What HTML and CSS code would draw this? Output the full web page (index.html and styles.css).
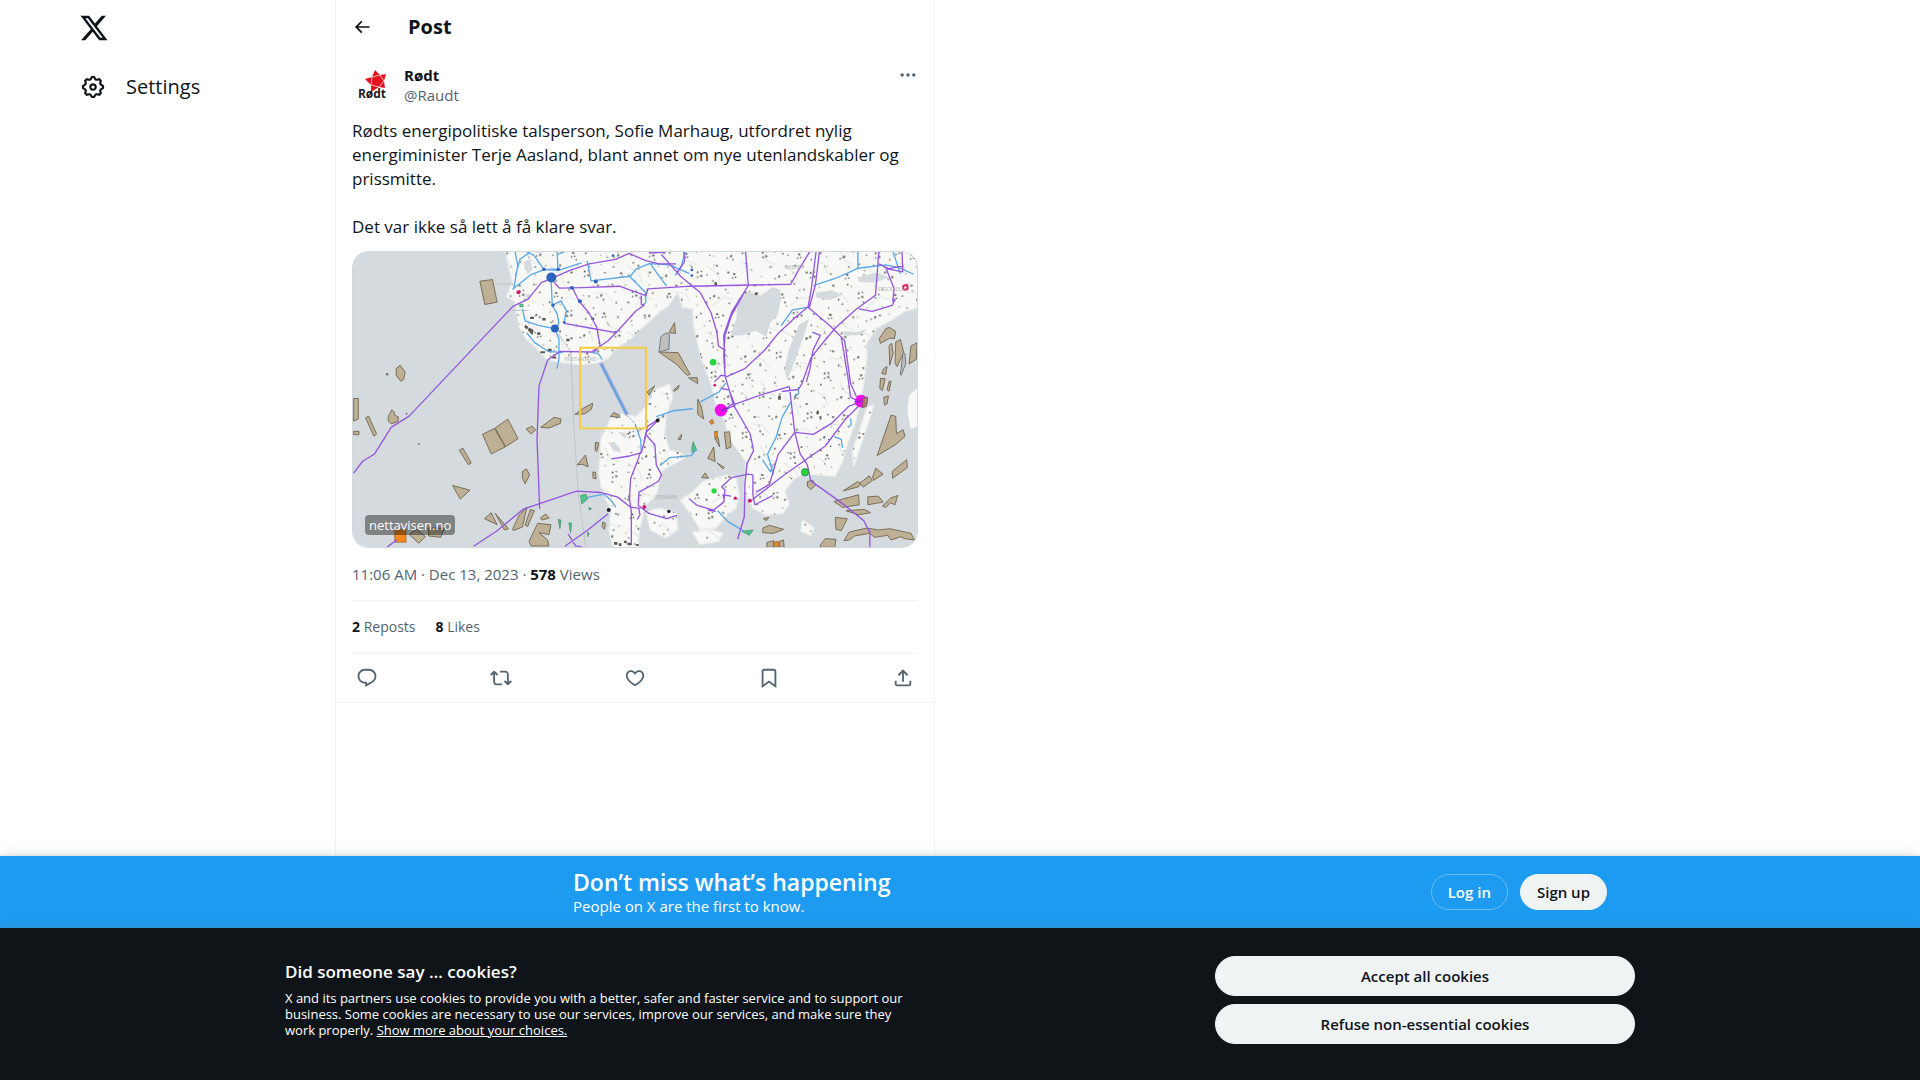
FILE: index.html
```
<!DOCTYPE html>
<html lang="en">
<head>
<meta charset="utf-8">
<meta name="viewport" content="width=device-width, initial-scale=1">
<title>Rødt on X</title>
<link rel="stylesheet" href="styles.css">
</head>
<body>
<div class="page">
  <header class="sidebar">
    <a class="logo" href="#" aria-label="X"><svg viewBox="0 0 24 24"><path d="M18.244 2.25h3.308l-7.227 8.26 8.502 11.24H16.17l-5.214-6.817L4.99 21.75H1.68l7.73-8.835L1.254 2.25H8.08l4.713 6.231zm-1.161 17.52h1.833L7.084 4.126H5.117z"/></svg></a>
    <nav>
      <a class="nav-link" href="#"><svg viewBox="0 0 24 24"><path d="M10.54 1.75h2.92l1.57 2.36c.11.17.32.25.53.21l2.53-.59 2.17 2.17-.58 2.54c-.05.2.04.41.21.53l2.36 1.57v2.92l-2.36 1.57c-.17.12-.26.33-.21.53l.58 2.54-2.17 2.17-2.53-.59c-.21-.04-.42.04-.53.21l-1.57 2.36h-2.92l-1.58-2.36c-.11-.17-.32-.25-.52-.21l-2.54.59-2.17-2.17.58-2.54c.05-.2-.03-.41-.21-.53l-2.35-1.57v-2.92L4.1 8.97c.18-.12.26-.33.21-.53L3.73 5.9 5.9 3.73l2.54.59c.2.04.41-.04.52-.21l1.58-2.36zm1.07 2l-.98 1.47C10.05 6.08 9 6.5 7.99 6.27l-1.46-.34-.6.6.33 1.46c.24 1.01-.18 2.07-1.05 2.64l-1.46.98v.78l1.46.98c.87.57 1.29 1.63 1.05 2.64l-.33 1.46.6.6 1.46-.34c1.01-.23 2.06.19 2.64 1.05l.98 1.47h.78l.97-1.47c.58-.86 1.63-1.28 2.65-1.05l1.45.34.61-.6-.34-1.46c-.23-1.01.18-2.07 1.05-2.64l1.47-.98v-.78l-1.47-.98c-.87-.57-1.28-1.63-1.05-2.64l.34-1.46-.61-.6-1.45.34c-1.02.23-2.07-.19-2.65-1.05l-.97-1.47h-.78zM12 10.5c-.83 0-1.5.67-1.5 1.5s.67 1.5 1.5 1.5c.82 0 1.5-.67 1.5-1.5s-.68-1.5-1.5-1.5zM8.5 12c0-1.93 1.56-3.5 3.5-3.5 1.93 0 3.5 1.57 3.5 3.5s-1.57 3.5-3.5 3.5c-1.94 0-3.5-1.57-3.5-3.5z"/></svg><span>Settings</span></a>
    </nav>
  </header>

  <main class="column">
    <div class="topbar">
      <button class="icon-button" type="button" aria-label="Back"><svg class="arrow" viewBox="0 0 24 24"><path d="M7.414 13l5.043 5.04-1.414 1.42L3.586 12l7.457-7.46 1.414 1.42L7.414 11H21v2H7.414z"/></svg></button>
      <h1>Post</h1>
    </div>

    <article class="post">
      <div class="author">
        <svg class="avatar" viewBox="0 0 40 40" role="img" aria-label="Rødt">
          <path fill="#e3101d" d="M23 5l5 5 6-1-2 7 1 7-6-1-8 5v-7l-6-6 7-2z"/>
          <path stroke="#fff" stroke-width=".7" fill="none" d="M20 12l8-2 4 6-5 6-8-2z"/>
          <text class="avatar-name" x="20" y="33" text-anchor="middle">Rødt</text>
        </svg>
        <div class="names">
          <a class="name" href="#">Rødt</a>
          <a class="handle" href="#">@Raudt</a>
        </div>
        <button class="icon-button more" type="button" aria-label="More"><svg viewBox="0 0 24 24"><path d="M3 12c0-1.1.9-2 2-2s2 .9 2 2-.9 2-2 2-2-.9-2-2zm9 2c1.1 0 2-.9 2-2s-.9-2-2-2-2 .9-2 2 .9 2 2 2zm7 0c1.1 0 2-.9 2-2s-.9-2-2-2-2 .9-2 2 .9 2 2 2z"/></svg></button>
      </div>

      <div class="text" lang="no">
        <p>Rødts energipolitiske talsperson, Sofie Marhaug, utfordret nylig energiminister Terje Aasland, blant annet om nye utenlandskabler og prissmitte.</p>
        <p>Det var ikke så lett å få klare svar.</p>
      </div>

      <a class="card" href="#">
        <svg class="map" viewBox="22 19 1698 888" preserveAspectRatio="xMidYMid slice" role="img" aria-label="Map of power cables between Norway, Denmark and Sweden">
          <defs>
            <pattern id="sites" width="236" height="198" patternUnits="userSpaceOnUse">
              <g fill="#555a4e">
                <path d="M12 20h5v5h-5zM42 8h4v4h-4zM78 33h6v4h-6zM110 14h4v6h-4zM150 27h4v4h-4zM190 10h5v5h-5zM220 40h4v4h-4zM25 60h4v5h-4zM96 62h5v4h-5zM142 86h4v4h-4zM171 58h5v5h-5zM205 78h6v5h-6zM48 118h7v4h-7zM93 115h4v5h-4zM160 104h4v5h-4zM198 130h4v4h-4zM22 150h5v4h-5zM66 160h4v6h-4zM140 168h5v5h-5zM176 155h5v4h-5zM36 186h4v4h-4z"/>
              </g>
              <path stroke="#dfe5e4" stroke-width="3" fill="none" d="M5 45l22 12 8 30M70 12l18 34 26 10M140 60l36 24 8 30M40 140l36 4 20 28M160 180l34-26 26 8"/>
            </pattern>
            <pattern id="clusters" width="157" height="131" patternUnits="userSpaceOnUse" patternTransform="rotate(23)">
              <path fill="#454a40" d="M8 12h6v5h-6zM17 20h4v4h-4zM9 25h4v4h-4zM62 50h5v5h-5zM72 44h4v4h-4zM76 56h6v5h-6zM68 64h4v4h-4zM120 30h4v4h-4zM136 96h5v7h-5zM128 108h4v4h-4zM30 100h4v4h-4z"/>
              <path fill="#a9a08a" d="M34 40h5v4h-5zM100 12h4v4h-4zM104 80h4v4h-4zM52 112h5v4h-5zM88 118h4v4h-4zM144 60h4v4h-4zM14 72h4v4h-4z"/>
            </pattern>
            <path id="land" d="M480 10L490 60 502 110 484 154 508 168 516 208 522 244 542 280 574 308 602 340 642 352 702 358 752 354 790 340 812 310 852 286 900 240 946 198 972 180 1000 140 1014 186 1045 190 1047 240 1059 290 1069 336 1089 386 1104 430 1114 480 1142 530 1154 580 1184 620 1204 650 1200 740 1225 790 1266 812 1316 806 1336 778 1322 740 1348 704 1378 688 1418 690 1474 694 1496 650 1510 598 1532 540 1548 480 1560 416 1570 328 1566 298 1598 248 1636 228 1680 200 1724 186V10zM765 640l4-60 28-60 34-12 44 6 32-34 20-44 48-20 10 40-20 54-5 60 15 45 40 10 5 15-65 35-10 35-10 40-30 30-20 70-5 60h-75l-12-50 4-70-25-45-10-60zM905 800l40-10 50 14 5 50-36 26-48-24zM1045 740l30-30 70-20 30 6 10 54-10 40-28 22-32 38-48 4-34-54-26-34zM1045 862l50-8 40 12-10 24-60 10zM1590 480l-15 50-30 90-15 45-5-45 20-60 25-75zM1375 825l35 25-10 22-30-12z"/>
          </defs>
          <path fill="#d4dadd" d="M0 0h1740v930H0z"/>
          <use href="#land" fill="#f8f9f7" stroke="#e9edec" stroke-width="4"/>
          <path fill="#f8f9f7" d="M1720 430l-24 20-5 50 10 52 22-8z"/>
          <use href="#land" fill="url(#sites)"/>
          <use href="#land" fill="url(#clusters)"/>

          <g fill="#d4dadd">
            <path d="M1180 160l34-20 36 10 34-26 24 8 2 34-10 44-22 22-12 42-32-18-38 14-38 2 18-52zM1395 220l-15 50-25 70-26 64-8-32 14-62 30-72zM1415 142l50-8 26 16-34 14-40-8zM1540 95l60-14 36 14-40 16-50-2zM1490 258l50 2 30-10-20 18-46 4z"/>
            <path d="M535 50l20-10 8 30-16 16zM540 150l16-6-4 22zM790 590l24 6 16 26-24-4zM820 560l30 6-10 14z"/>
          </g>
          <path stroke="#bfc5c8" stroke-width="3" fill="none" d="M640 265l38 55 8 210 15 225 22 150M450 115h50M500 195h50"/>

          <g fill="#beb095" stroke="#776d59" stroke-width="3">
            <path d="M404 107l38-5 14 68-37 7zM412 568l36-18 32 56-42 21zM450 549l38-27 31 59-38 24zM152 370l12-10 15 20-4 22-9 6-14-17zM24 460h14v62l-14 6zM60 518l9-5 24 54-8 7zM128 515l11-21 8 8v8l12 6-2 14-20 6-9-8zM24 559h16v10H24zM342 616l11-6 25 44-9 5zM322 722l52 14-29 27zM532 680l12-8 10 18-14 27-8-18zM543 552l18-9 11 12-14 12zM587 547l40-30 21 4-2 14-34 14zM690 508l24-18 30-16-4 18-20 14zM797 514l10-12 18 9-4 6zM697 660l25-30 8 36-18-8zM752 592l10 2-6 26-5-4z"/>
            <path d="M418 822l20-18 18 36zM450 806l40 46-12 4zM502 855l20-44 24-24-14 60-26 10zM540 842l16-48 12 4-20 47zM586 820l16-12 11 12-22 6zM552 890l26-54 40 4-6 30-30-6 26 22 4 18h-54zM192 870l20-18 28 24-20 20zM248 850h50l-12 28-36-4zM744 682h8l2 20-9-2zM774 832l8 4-3 18-7-8z"/>
            <path d="M990 232l3 32-20-2zM943 320l58 2 36 66-10 2-30-32zM1032 398l26-1 2 18zM908 440l22-18-16 28zM988 434l16-14-4 12-12 6zM1060 462l10 20 8 40-18-14zM1140 562l16-2 4 46-14 6zM1112 558l10 24 4 24-10-18zM1090 640l18-34 4 44zM1072 698l10-14 10 16zM1000 582l12-14-4 16zM1118 654l22 14-4 4zM1256 850l20-8 42 12-30 12-32-2zM1258 822l16-4-8 10z"/>
            <path d="M1606 280l20-30 10-4 20 12-4 22-14-2-6 4-22 12zM1636 300l8-6 4 30-10 36zM1656 290l14-8 10 40-20 42-6-10zM1702 302l18-10-2 50-22 14zM1620 370l10-6-4 24-12-4zM1610 400h14l-8 36-8-6zM1636 408h6l-6 30-6-4zM1620 456l14-4-4 24-8 4zM1600 632l42-122 14 4 2 52 20-12 6 20-30 26zM1645 680l44-36 2 24-44 32zM1498 738l44-28 8 6-6 10zM1548 715l28-22 10 14-28 20zM1586 696l10-26 22 18-28 18zM1470 770l74-20 2 30-50 8zM1506 798l56-4 18 10-36 6zM1572 756l32-2 14 18-46 8zM1616 784l24-24 22-8-8 28-14-6-14 14zM1474 818l36 4-18 36-16-4zM1500 888l16-26 54-12 34 6 34-4 64 14 10 20-30-4-10-6-30 10-10-14-40 6-14-12-46 8-16 12zM1430 900l14-18 32 2-4 24h-44zM1390 710l16-4 8 16-14 12-10-10z"/>
          </g>
          <path fill="#bdbfc1" stroke="#777" stroke-width="3" d="M943 320l6-46 16-12 10 6-2 44zM1670 388l8-66 6 4 2 30-14 34z"/>
          <path fill="#f5871f" stroke="#80683a" stroke-width="2" d="M147 857l34-4 1 40h-34zM1095 530l8-8 6 12-8 4zM1110 562l10-4-2 18-6 8zM1290 892l12-2 4 16h-16z"/>
          <path fill="#beb095" stroke="#776d59" stroke-width="3" d="M1268 894l20-6v20h-20zM1306 890l12-4 2 22h-14z"/>
          <path fill="#4fc38a" stroke="#3a8a63" stroke-width="2" d="M707 752l16-4 6 14-18 16zM732 788l8 4-6 4zM1042 610l4-20 11 26-14 6zM1193 860l34-4-12 16zM524 176h10v8h-10zM672 834l8 2-3 28zM640 824l8 2-3 26zM728 862l5 4-4 10z"/>
          <path fill="#5c5850" d="M808 892h10v8h-10zM822 896h8v8h-8zM838 888h8v7h-8zM850 894h12v8h-12zM874 898h8v6h-8zM540 238l10 6-4 8-8-6zM552 246l14 8-4 16-14-16zM555 215h12v6h-12zM592 218h10v7h-10zM576 262h10v6h-10zM608 310h12v8h-12zM586 318h14v6h-14zM622 334h12v6h-12zM664 280h10v8h-10zM740 216h8v8h-8zM1110 110h8v10h-8zM1234 140l8 2-4 8-8-4zM1420 495l6 6-4 8-6-4zM1426 512l8 4-6 10zM1302 452h8v12h-8z"/>

          <g fill="none" stroke="#5aa8e8" stroke-width="4" stroke-linejoin="round">
            <path d="M510 19l8 40-12 70M545 19l22 10 30 43 42-2-2-44 20-7M502 132l54-44 42-16 42 2 70-22M555 20l-30 20-14 50M618 96l4 84 14 24 6 30-12 16 12 30v62l-6 28M624 178l24-12 16 28-6 36M532 190l8 36 40 14 50 10M545 262l24 30 40 26 44 4M727 46l12 60 118-14 18-22 40-16 60 4 60 26M852 90l50 50 2 30-10 10M918 56l48 66M1022 19l-12 44-18 26M740 322l20 2 12 18M1408 120l68-22 66-30 84-10 40 8 44 20M1542 72V19M1648 19l22 66M1395 185l-50 8-34 48M1340 470l-26 46-18 60-26 52 18 60M1255 645l24 36 6-20M1068 470l56-30 20-26M935 515l50-18 60-6M946 662l30-24 64-6 16-20M1120 798l30 32 50 30M728 758l50-10 22 20 14 20M872 540l16 44 2 36M1470 575l22 8 4 26M1520 520l2 20-10 6M1362 425l2 20-14 10"/>
          </g>
          <g fill="none" stroke="#9457e0" stroke-width="4" stroke-linejoin="round">
            <path d="M24 685l27-36 36-22 50-80 54-34 312-330 46-22 40-50 30-12 54-24 60-20 80-14 40-18 50 22 42 10h50M618 100l26 28 70-2 110-4 50 18 30 10 6-20 130-8 300-6 22-40 46-76M682 126l20 40 30 36 24 44 10 56-20 20M658 234l90 16 66 12 60-66 24-16M814 262l-24 24-50 34-94-2-38 26-26 78-6 160 8 210M385 905l70-46 80-66 60-20 100-34 74 4 50 14 38 30 30 4M660 905l70-50 60-48M670 868l22 36 18 2M125 907l30-22M800 642l50-8 40-10 8-30 10-50 36-22"/>
            <path d="M888 620l-10 30-20 50-4 60 6 40v100M898 590l8-30 34-34M905 570l26 30 4 60 16 30-10 20-58 32-2 40 32 24 54 16 30-10M882 790l4 20-8 14"/>
            <path d="M890 150v26l10 4M914 22l50-3M950 26l58 66 60 50 32 60 18 60 4 40 22 14M1018 19l2 30-24 34M1204 19l8 100-50 90-20 60-4 60 4 62 26 90 50 86 10 50-20 40-6 60-2 100-20 66M1206 130l-44 70-24 70 4 100M1152 392l50-22 60-56 40-50 50-46 40-34M1416 19l-14 110-10 56 70 60 40 40 18 130 18 40M1426 19l-12 100-18 66M1492 276l20 120 8 60 30 16M1605 19l-10 130-60 44-60 54-34 40-40 50-28 80-10 16-50 6M1545 190l40 8 60-18 10-20M1170 478l90-32 70-20h6l16 136 16 64 22 34 10 48 90 64 70 56 18 36v44M1352 562l56 6 56-34 50-50 40-16M1224 765l90-70 70-50 60-42 60-80 50-50M1352 562l-50 66-26 90-40 24M1110 410l20-20 22 4M1130 430l24 4 18 46-30 14M1145 490l24-18M1405 260l24 10-22 44-10 60-10 36M1675 19l2 60-50-10 24 60-4 40M1605 55l30 14 44-8"/>
            <path d="M1034 762l24 20 50 14 30-24 4-36-10-10 30-28 50-10 14 2v60l6 30 54-28M1140 768l-4-18 24 4M1090 796l24 4"/>
          </g>
          <path stroke="#c3b5d9" stroke-width="12" d="M768 352l80 158"/>
          <path stroke="#6ba5df" stroke-width="8" d="M769 356l77 152"/>
          <path stroke="#74889c" stroke-width="3" stroke-dasharray="6 5" fill="none" d="M848 512l22 22 14 28"/>
          <path fill="none" stroke="#f4cc3e" stroke-width="6" d="M706 307h198v243H706z"/>

          <g fill="#2a64bd"><circle cx="619" cy="96" r="15"/><circle cx="630" cy="249" r="12"/><circle cx="681" cy="127" r="6"/><circle cx="705" cy="167" r="6"/><circle cx="753" cy="108" r="6"/><circle cx="597" cy="71" r="5"/><circle cx="640" cy="71" r="5"/><circle cx="624" cy="179" r="5"/><circle cx="658" cy="231" r="4"/><circle cx="805" cy="30" r="4"/><circle cx="1042" cy="73" r="4"/><circle cx="1042" cy="90" r="4"/></g>
          <g fill="#ef0ee7"><circle cx="1130" cy="495" r="19"/><circle cx="1552" cy="468" r="19"/></g>
          <path fill="#a57e67" stroke="#6e4f4f" stroke-width="2" d="M1558 458l14-2-4 28-12 4z"/>
          <path stroke="#6d2bd0" stroke-width="4" d="M1130 495l22-6M1532 470l20-2"/>
          <g fill="#27d63c"><circle cx="1106" cy="351" r="10"/><circle cx="1109" cy="738" r="8"/><circle cx="1383" cy="682" r="11" stroke="#19733a" stroke-width="2"/></g>
          <g fill="#d5146c"><circle cx="520" cy="140" r="6"/><circle cx="899" cy="787" r="6"/><circle cx="1217" cy="768" r="6"/><circle cx="1111" cy="420" r="4"/><circle cx="1173" cy="760" r="5"/></g>
          <g fill="#221f2c"><circle cx="792" cy="796" r="6"/><circle cx="939" cy="526" r="6"/><circle cx="973" cy="800" r="5"/></g>
          <g fill="#6f767c"><circle cx="125" cy="387" r="4"/><circle cx="220" cy="597" r="3"/><circle cx="183" cy="506" r="3"/></g>
          <circle cx="1685" cy="126" r="7" fill="#fff" stroke="#e2205a" stroke-width="6"/>
          <g class="map-labels"><text x="658" y="346">KRISTIANSAND</text><text x="1322" y="71">SWEDEN</text><text x="1602" y="135">STOCKHOLM</text><text x="932" y="764">DENMARK</text></g>
        </svg>
        <span class="source">nettavisen.no</span>
      </a>

      <div class="meta"><a href="#">11:06 AM · Dec 13, 2023</a> · <strong>578</strong> Views</div>
      <div class="stats"><span><strong>2</strong> Reposts</span><span><strong>8</strong> Likes</span></div>
      <div class="actions">
        <button type="button" aria-label="Reply"><svg viewBox="0 0 24 24"><path d="M1.751 10c0-4.42 3.584-8 8.005-8h4.366c4.49 0 8.129 3.64 8.129 8.13 0 2.96-1.607 5.68-4.196 7.11l-8.054 4.46v-3.69h-.067c-4.49.1-8.183-3.51-8.183-8.01zm8.005-6c-3.317 0-6.005 2.69-6.005 6 0 3.37 2.77 6.08 6.138 6.01l.351-.01h1.761v2.3l5.087-2.81c1.951-1.08 3.163-3.13 3.163-5.36 0-3.39-2.744-6.13-6.129-6.13H9.756z"/></svg></button>
        <button type="button" aria-label="Repost"><svg viewBox="0 0 24 24"><path d="M4.5 3.88l4.432 4.14-1.364 1.46L5.5 7.55V16c0 1.1.896 2 2 2H13v2H7.5c-2.209 0-4-1.79-4-4V7.55L1.432 9.48.068 8.02 4.5 3.88zM16.5 6H11V4h5.5c2.209 0 4 1.79 4 4v8.45l2.068-1.93 1.364 1.46-4.432 4.14-4.432-4.14 1.364-1.46 2.068 1.93V8c0-1.1-.896-2-2-2z"/></svg></button>
        <button type="button" aria-label="Like"><svg viewBox="0 0 24 24"><path d="M16.697 5.5c-1.222-.06-2.679.51-3.89 2.16l-.805 1.09-.806-1.09C9.984 6.01 8.526 5.44 7.304 5.5c-1.243.07-2.349.78-2.91 1.91-.552 1.12-.633 2.78.479 4.82 1.074 1.97 3.257 4.27 7.129 6.61 3.87-2.34 6.052-4.64 7.126-6.61 1.111-2.04 1.03-3.7.477-4.82-.561-1.13-1.666-1.84-2.908-1.91zm4.187 7.69c-1.351 2.48-4.001 5.12-8.379 7.67l-.503.3-.504-.3c-4.379-2.55-7.029-5.19-8.382-7.67-1.36-2.5-1.41-4.86-.514-6.67.887-1.79 2.647-2.91 4.601-3.01 1.651-.09 3.368.56 4.798 2.01 1.429-1.45 3.146-2.1 4.796-2.01 1.954.1 3.714 1.22 4.601 3.01.896 1.81.846 4.17-.514 6.67z"/></svg></button>
        <button type="button" aria-label="Bookmark"><svg viewBox="0 0 24 24"><path d="M4 4.5C4 3.12 5.119 2 6.5 2h11C18.881 2 20 3.12 20 4.5v18.44l-8-5.71-8 5.71V4.5zM6.5 4c-.276 0-.5.22-.5.5v14.56l6-4.29 6 4.29V4.5c0-.28-.224-.5-.5-.5h-11z"/></svg></button>
        <button type="button" aria-label="Share"><svg viewBox="0 0 24 24"><path d="M12 2.59l5.7 5.7-1.41 1.42L13 6.41V16h-2V6.41l-3.3 3.3-1.41-1.42L12 2.59zM21 15l-.02 3.51c0 1.38-1.12 2.49-2.5 2.49H5.5C4.11 21 3 19.88 3 18.5V15h2v3.5c0 .28.22.5.5.5h12.98c.28 0 .5-.22.5-.5L19 15h2z"/></svg></button>
      </div>
    </article>
  </main>
</div>

<footer class="bottom">
  <section class="signup">
    <div class="signup-inner">
      <div class="signup-text">
        <h2>Don’t miss what’s happening</h2>
        <p>People on X are the first to know.</p>
      </div>
      <button class="pill outline" type="button">Log in</button>
      <button class="pill" type="button">Sign up</button>
    </div>
  </section>
  <section class="cookies">
    <div class="cookies-inner">
      <div class="cookies-text">
        <h2>Did someone say … cookies?</h2>
        <p>X and its partners use cookies to provide you with a better, safer and faster service and to support our business. Some cookies are necessary to use our services, improve our services, and make sure they work properly. <a href="#">Show more about your choices.</a></p>
      </div>
      <div class="cookies-buttons">
        <button class="pill tall" type="button">Accept all cookies</button>
        <button class="pill tall" type="button">Refuse non-essential cookies</button>
      </div>
    </div>
  </section>
</footer>
</body>
</html>
```
FILE: styles.css
```
* { box-sizing: border-box; }
body {
  margin: 0;
  min-height: 100vh;
  display: flex;
  flex-direction: column;
  background: #fff;
  color: #0f1419;
  font: 15px/20px "Open Sans", "Noto Sans", sans-serif;
}
h1, h2, p { margin: 0; }
a { color: inherit; text-decoration: none; }
button { font: inherit; color: inherit; background: none; border: 0; padding: 0; cursor: pointer; }
svg { display: block; fill: currentColor; }
strong { font-weight: 700; color: #0f1419; }

.page { flex: 1; display: flex; }

.sidebar { flex: 0 1 335px; padding: 2px 12px 0 68px; }
.logo { display: flex; width: 52px; height: 52px; align-items: center; justify-content: center; }
.logo svg { width: 30px; height: 30px; }
.nav-link { display: inline-flex; align-items: center; gap: 20px; margin-top: 8px; padding: 12px; font-size: 20px; line-height: 24px; }
.nav-link svg { width: 26px; height: 26px; }

.column { flex: 0 1 600px; min-width: 0; border: solid #eff3f4; border-width: 0 1px; }
.topbar { display: flex; align-items: center; gap: 36px; height: 53px; padding: 0 16px; }
.topbar h1 { font-size: 20px; line-height: 24px; font-weight: 700; }
.icon-button { display: flex; height: 20px; align-items: center; }
.icon-button svg { width: 20px; height: 20px; }

.post { padding: 12px 16px 0; border-bottom: 1px solid #eff3f4; }
.author { display: flex; gap: 12px; margin-bottom: 14px; }
.avatar { width: 40px; height: 40px; }
.avatar-name { font: 700 12px "Open Sans", sans-serif; fill: #1d1d1b; }
.names { flex: 1; display: flex; flex-direction: column; }
.name { font-weight: 700; }
.handle, .more, .meta, .stats, .actions { color: #536471; }

.text { font-size: 17px; line-height: 24px; }
.text p + p { margin-top: 24px; }

.card { display: block; position: relative; margin-top: 12px; border: 1px solid #cfd9de; border-radius: 16px; overflow: hidden; }
.map { width: 100%; height: auto; }
.map-labels { font: 14px "Open Sans", sans-serif; fill: #a9b0b3; }
.source { position: absolute; left: 12px; bottom: 12px; padding: 0 4px; border-radius: 4px; background: rgba(0, 0, 0, .4); color: #fff; font-size: 13px; }

.meta { padding: 16px 0; border-bottom: 1px solid #eff3f4; }
.stats { display: flex; gap: 20px; padding: 16px 0; border-bottom: 1px solid #eff3f4; font-size: 14px; }
.actions { display: flex; justify-content: space-between; align-items: center; height: 48px; padding: 0 4px; }
.actions svg { width: 22px; height: 22px; }

.bottom { position: sticky; bottom: 0; }
.signup { background: #1d9bf0; color: #fff; box-shadow: 0 0 15px rgba(101, 119, 134, .2), 0 0 3px 1px rgba(101, 119, 134, .15); }
.signup-inner { display: flex; align-items: center; gap: 12px; max-width: 1350px; margin: 0 auto; padding: 12px 28px 12px 288px; }
.signup-text { flex: 1; }
.signup h2 { font-size: 23px; line-height: 28px; font-weight: 600; }

.pill { height: 36px; padding: 0 16px; border: 1px solid #eff3f4; border-radius: 20px; background: #eff3f4; color: #0f1419; font-weight: 600; }
.pill.outline { background: transparent; border-color: #69bcf5; color: #fff; }
.pill.tall { height: 40px; }

.cookies { position: relative; background: #0f1419; color: #fff; padding: 28px 0 36px; box-shadow: 0 0 15px rgba(101, 119, 134, .2), 0 0 3px 1px rgba(101, 119, 134, .15); }
.cookies-inner { display: flex; align-items: center; justify-content: space-between; gap: 32px; max-width: 1350px; margin: 0 auto; }
.cookies-text { flex: 0 1 632px; }
.cookies h2 { margin-bottom: 8px; font-size: 17px; line-height: 20px; font-weight: 600; }
.cookies p { font-size: 13px; line-height: 16px; }
.cookies a { text-decoration: underline; }
.cookies-buttons { flex: 0 1 420px; display: flex; flex-direction: column; gap: 8px; }
```
